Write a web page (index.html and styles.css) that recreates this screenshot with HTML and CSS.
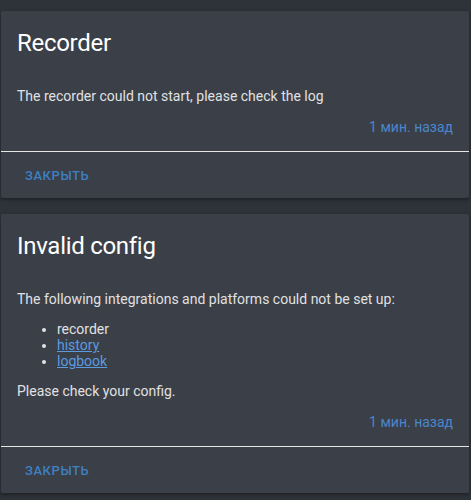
FILE: index.html
```html
<!DOCTYPE html>
<html lang="ru">

<head>
    <meta charset="UTF-8">
    <meta name="viewport" content="width=device-width, initial-scale=1.0">
    <title>Уведомления</title>
    <link rel="stylesheet" href="styles.css">
</head>

<body>
    <div class="list">
        <div class="card">
            <div class="card-header">Recorder</div>
            <div class="card-content">
                <div class="markdown">
                    <p>The recorder could not start, please check the log</p>
                </div>
                <div class="time">1 мин. назад</div>
            </div>
            <div class="card-actions">
                <button class="btn">Закрыть</button>
            </div>
        </div>

        <div class="card">
            <div class="card-header">Invalid config</div>
            <div class="card-content">
                <div class="markdown">
                    <p>The following integrations and platforms could not be set up:</p>
                    <ul>
                        <li>recorder</li>
                        <li><a href="#">history</a></li>
                        <li><a href="#">logbook</a></li>
                    </ul>
                    <p>Please check your config.</p>
                </div>
                <div class="time">1 мин. назад</div>
            </div>
            <div class="card-actions">
                <button class="btn">Закрыть</button>
            </div>
        </div>
    </div>
</body>

</html>
```

FILE: styles.css
```css
* {
    margin: 0;
    padding: 0;
    box-sizing: border-box;
}

html,
body {
    height: 100%;
    width: 100%;
}

body {
    background: #2e3239;
    font-family: Roboto, "Noto Sans", sans-serif;
    color: #e1e1e1;
}

.list {
    display: flex;
    flex-direction: column;
    gap: 16px;
    padding: 11px 2px 0 1px;
}

.card {
    background: #3a3f48;
    border-radius: 2px;
    box-shadow: 0 2px 2px rgba(0, 0, 0, 0.2), 0 1px 5px rgba(0, 0, 0, 0.15);
}

.card-header {
    padding: 16px 16px 0;
    font-size: 24px;
    line-height: 32px;
    letter-spacing: -0.012em;
    color: #ffffff;
}

.card-content {
    padding: 29px 16px 16px;
    font-size: 14px;
    line-height: 16px;
}

.markdown ul {
    margin: 14px 0;
    padding-left: 40px;
}

.markdown a {
    color: #5b9be0;
}

.time {
    margin-top: 15px;
    text-align: right;
    color: #4a87cb;
}

.card-actions {
    border-top: 1px solid #e6e6e6;
    padding: 5px 16px;
}

.btn {
    height: 36px;
    padding: 0 8px;
    background: none;
    border: none;
    font-family: Roboto, "Noto Sans", sans-serif;
    font-size: 13px;
    font-weight: 500;
    letter-spacing: 0.55px;
    text-transform: uppercase;
    color: #3f7fc2;
}
```
